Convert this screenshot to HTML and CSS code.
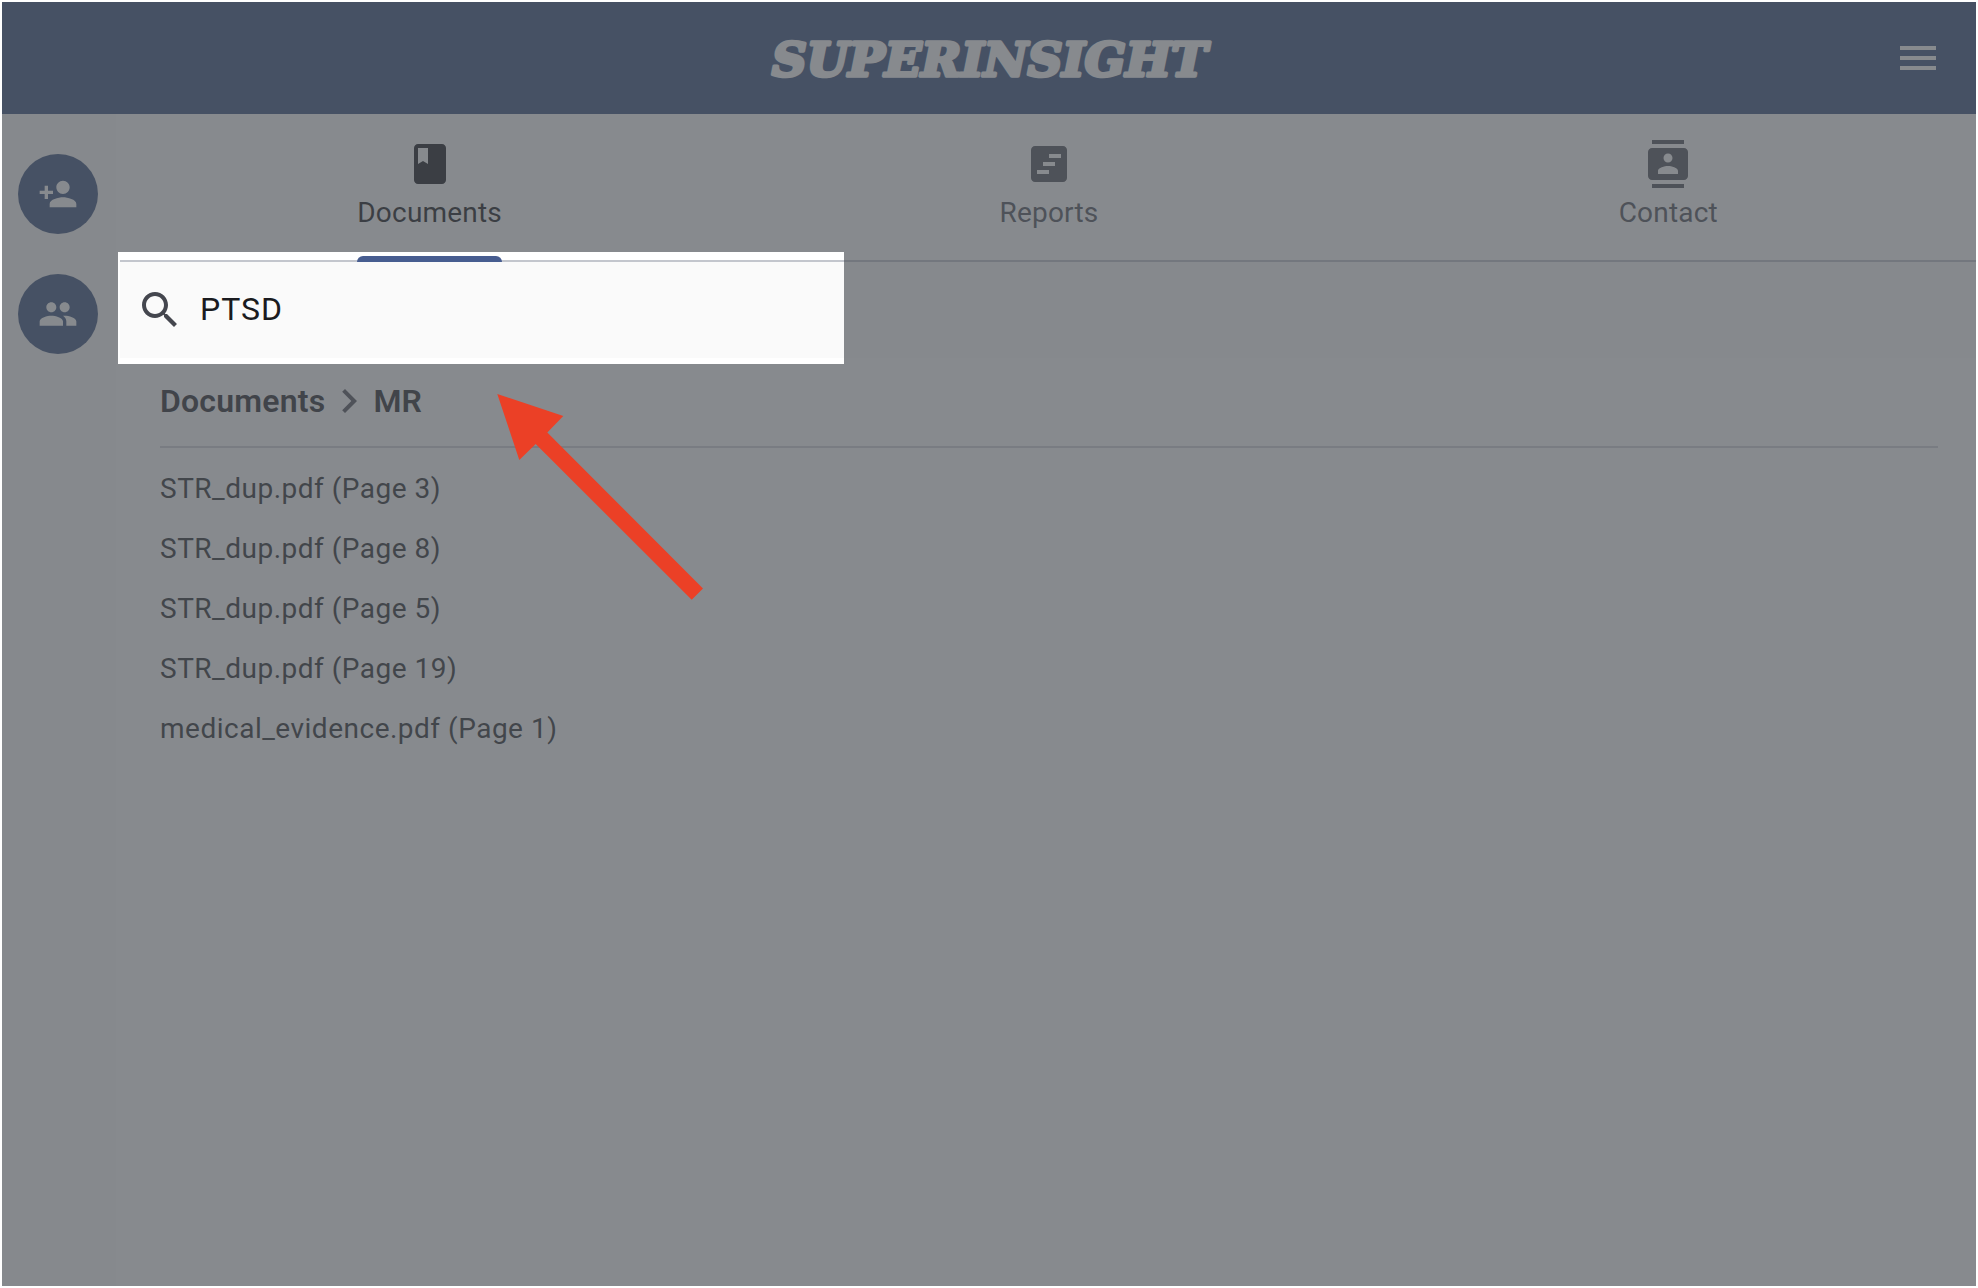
FILE: index.html
```html
<!DOCTYPE html>
<html lang="en">
<head>
<meta charset="utf-8">
<title>Superinsight</title>
<link rel="stylesheet" href="styles.css">
</head>
<body>
<div class="app">
  <header class="topbar">
    <svg class="logo" width="500" height="80" viewBox="0 0 500 80" role="img" aria-label="Superinsight">
      <text class="logo-text" x="33" y="57.500" textLength="435" lengthAdjust="spacingAndGlyphs">SUPERINSIGHT</text>
    </svg>
    <svg class="menu" width="48" height="48" viewBox="0 0 24 24"><path d="M3 18h18v-2H3v2zm0-5h18v-2H3v2zm0-7v2h18V6H3z"/></svg>
  </header>
  <div class="body">
    <nav class="rail">
      <button class="round"><svg width="40" height="40" viewBox="0 0 24 24"><path d="M15 12c2.210 0 4-1.790 4-4s-1.790-4-4-4-4 1.790-4 4 1.790 4 4 4zm-9-2V7H4v3H1v2h3v3h2v-3h3v-2H6zm9 4c-2.670 0-8 1.340-8 4v2h16v-2c0-2.660-5.330-4-8-4z"/></svg></button>
      <button class="round"><svg width="40" height="40" viewBox="0 0 24 24"><path d="M16 11c1.660 0 2.990-1.340 2.990-3S17.660 5 16 5c-1.660 0-3 1.340-3 3s1.340 3 3 3zm-8 0c1.660 0 2.990-1.340 2.990-3S9.660 5 8 5C6.340 5 5 6.340 5 8s1.340 3 3 3zm0 2c-2.330 0-7 1.170-7 3.500V19h14v-2.500c0-2.330-4.670-3.500-7-3.500zm8 0c-.29 0-.62.02-.97.05 1.160.84 1.970 1.970 1.970 3.450V19h6v-2.500c0-2.330-4.670-3.500-7-3.500z"/></svg></button>
    </nav>
    <main class="content">
      <div class="tabs">
        <div class="tab active">
          <svg width="48" height="48" viewBox="0 0 24 24"><path d="M18 2H6c-1.100 0-2 .9-2 2v16c0 1.100.9 2 2 2h12c1.100 0 2-.9 2-2V4c0-1.100-.9-2-2-2zM6 4h5v8l-2.500-1.500L6 12V4z"/></svg>
          <span class="tab-label">Documents</span>
        </div>
        <div class="tab">
          <svg width="48" height="48" viewBox="0 0 24 24"><path d="M19 3H5c-1.100 0-2 .9-2 2v14c0 1.100.9 2 2 2h14c1.100 0 2-.9 2-2V5c0-1.100-.9-2-2-2zm-7 14H6v-2h6v2zm3-4H9v-2h6v2zm3-4h-6V7h6v2z"/></svg>
          <span class="tab-label">Reports</span>
        </div>
        <div class="tab">
          <svg width="48" height="48" viewBox="0 0 24 24"><path d="M20 0H4v2h16V0zM4 24h16v-2H4v2zM20 4H4c-1.100 0-2 .9-2 2v12c0 1.100.9 2 2 2h16c1.100 0 2-.9 2-2V6c0-1.100-.9-2-2-2zm-8 2.750c1.240 0 2.250 1.010 2.250 2.250s-1.010 2.250-2.250 2.250S9.750 10.240 9.750 9 10.760 6.750 12 6.750zM17 17H7v-1.500c0-1.670 3.330-2.500 5-2.500s5 .83 5 2.500V17z"/></svg>
          <span class="tab-label">Contact</span>
        </div>
      </div>
      <div class="search">
        <svg width="48" height="48" viewBox="0 0 24 24"><path d="M15.500 14h-.79l-.28-.27C15.410 12.590 16 11.110 16 9.500 16 5.910 13.090 3 9.500 3S3 5.910 3 9.500 5.910 16 9.500 16c1.610 0 3.090-.59 4.230-1.570l.27.28v.79l5 4.990L20.490 19l-4.990-5zm-6 0C7.010 14 5 11.990 5 9.500S7.010 5 9.500 5 14 7.010 14 9.500 11.990 14 9.500 14z"/></svg>
        <span class="query">PTSD</span>
      </div>
      <section class="results">
        <div class="crumbs">
          <span class="crumb">Documents</span>
          <svg width="48" height="48" viewBox="0 0 24 24"><path d="M10 6L8.590 7.410 13.170 12l-4.580 4.590L10 18l6-6z"/></svg>
          <span class="crumb">MR</span>
        </div>
        <ul class="files">
          <li>STR_dup.pdf (Page 3)</li>
          <li>STR_dup.pdf (Page 8)</li>
          <li>STR_dup.pdf (Page 5)</li>
          <li>STR_dup.pdf (Page 19)</li>
          <li>medical_evidence.pdf (Page 1)</li>
        </ul>
      </section>
    </main>
  </div>
  <div class="spotlight"></div>
  <svg class="arrow" width="207" height="207" viewBox="0 0 207 207"><path d="M.3 0L66.300 22 50.300 38.500 206 194.500 194.700 205.700 38.700 50 22.300 66z"/></svg>
</div>
</body>
</html>
```
FILE: styles.css
```css
* { box-sizing: border-box; }

body {
  margin: 0;
  padding: 2px;
  height: 1288px;
  overflow: hidden;
  background: #fff;
  font-family: Roboto, "Liberation Sans", sans-serif;
}

svg { display: block; fill: currentColor; flex: none; }

.app {
  position: relative;
  display: flex;
  flex-direction: column;
  width: 1974px;
  height: 1284px;
  overflow: hidden;
}

.topbar {
  display: grid;
  grid-template-columns: 1fr auto 1fr;
  align-items: center;
  height: 112px;
  padding: 0 34px;
  background: #3c547f;
  color: #fff;
}

.logo { grid-column: 2; }

.logo-text {
  font: italic 700 46px "DejaVu Serif", serif;
  stroke: currentColor;
  stroke-width: 3.5px;
  stroke-linejoin: round;
}

.menu { justify-self: end; }

.body { display: flex; flex: 1; }

.rail {
  display: flex;
  flex: none;
  flex-direction: column;
  align-items: center;
  gap: 40px;
  width: 114px;
  padding: 40px 2px 0 0;
  background: #fafafa;
}

.round {
  display: grid;
  place-items: center;
  width: 80px;
  height: 80px;
  padding: 0;
  border: 0;
  border-radius: 50%;
  background: #3c547f;
  color: #fff;
}

.content { flex: none; width: 1862px; padding-left: 4px; }

.tabs {
  display: flex;
  height: 148px;
  border-bottom: 2px solid #c3c6cd;
}

.tab {
  display: flex;
  flex-direction: column;
  align-items: center;
  flex: 1 1 0;
  height: 148px;
  padding-top: 26px;
  color: #54565e;
}

.tab-label { margin-top: 9px; font-size: 28px; line-height: 32px; letter-spacing: 0.2px; }

.active { color: #1a1b20; }

.active::after {
  content: "";
  width: 145px;
  height: 6px;
  margin-top: auto;
  border-radius: 6px 6px 0 0;
  background: #475d90;
}

.search {
  display: flex;
  align-items: center;
  height: 96px;
  gap: 16px;
  padding: 0 16px;
  background: #fafafa;
  color: #44464e;
}

.query { padding-bottom: 2px; font-size: 32px; line-height: 48px; letter-spacing: 1px; color: #1a1b20; }

.results { width: 1818px; padding: 0 0 0 40px; }

.crumbs {
  display: flex;
  align-items: center;
  height: 90px;
  padding-bottom: 2px;
  border-bottom: 2px solid #d3d3db;
  color: #55565f;
}

.crumb { font-size: 32px; font-weight: 600; line-height: 40px; letter-spacing: 0.2px; color: #2c2d31; }

.files {
  margin: 0;
  padding: 11px 0 0;
  list-style: none;
  font-size: 28px;
  line-height: 60px;
  letter-spacing: 0.5px;
  color: #303136;
}

.spotlight {
  position: absolute;
  left: 116px;
  top: 250px;
  width: 726px;
  height: 112px;
  box-shadow: 0 0 0 2000px rgba(76, 81, 87, 0.67);
}

.arrow { position: absolute; left: 495px; top: 392px; color: #eb4026; }
```
